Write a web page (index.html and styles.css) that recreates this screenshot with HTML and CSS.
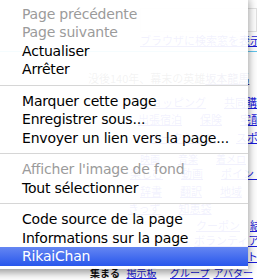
FILE: index.html
```html
<!DOCTYPE html>
<html lang="fr">
<head>
  <meta charset="UTF-8" />
  <title>Menu contextuel</title>
  <link rel="stylesheet" href="styles.css">
</head>
<body>
  <!-- Page web en arriere-plan -->
  <div class="page">
    <div class="row row-search"><div class="search-box"></div></div>
    <div class="row row-hint"><a class="link">ブラウザに検索窓を表示</a></div>
    <div class="rule"></div>
    <div class="row row-news">没後140年、幕末の英雄 <a class="link dark">坂本龍馬</a></div>
    <div class="row row-a"><a class="link">ショッピング</a><a class="link">共同購入</a></div>
    <div class="row row-b"><a class="link">出張宿泊</a><a class="link">保険</a><a class="link">宅配</a></div>
    <div class="row row-c"><a class="link">オークション</a><a class="link">スポーツ</a></div>
    <div class="row row-d"><a class="link">映画</a><a class="link">音楽</a><a class="link">着メロ</a></div>
    <div class="row row-e"><a class="link">楽しむ</a><a class="link">動画</a><a class="link">ポイント</a></div>
    <div class="row row-f"><a class="link">辞書</a><a class="link">翻訳</a><a class="link">地域</a></div>
    <div class="row row-g"><a class="link">きっず</a><a class="link">知恵袋</a></div>
    <div class="row row-h"><a class="link">クーポン</a><a class="link">結婚</a></div>
    <div class="row row-i"><a class="link">ボランティア</a></div>
    <div class="row row-j"><a class="link">求人・転職</a><a class="link">アルバイト</a></div>
    <div class="row row-k"><b class="label">集まる</b><a class="link">掲示板</a><a class="link">グループ</a><a class="link">アバター</a></div>
  </div>

  <!-- Menu contextuel -->
  <div class="menu">
    <div class="item disabled">Page précédente</div>
    <div class="item disabled">Page suivante</div>
    <div class="item">Actualiser</div>
    <div class="item">Arrêter</div>
    <div class="sep"></div>
    <div class="item">Marquer cette page</div>
    <div class="item">Enregistrer sous...</div>
    <div class="item">Envoyer un lien vers la page...</div>
    <div class="sep"></div>
    <div class="item disabled">Afficher l'image de fond</div>
    <div class="item">Tout sélectionner</div>
    <div class="sep"></div>
    <div class="item">Code source de la page</div>
    <div class="item">Informations sur la page</div>
    <div class="item selected">RikaiChan</div>
  </div>
</body>
</html>
```

FILE: styles.css
```css
body {
  margin: 0;
  width: 257px;
  height: 280px;
  overflow: hidden;
  position: relative;
  background: #ffffff;
}

/* Page en arriere-plan */
.page {
  display: flex;
  flex-direction: column;
  height: 280px;
  overflow: hidden;
  font-family: "Noto Sans CJK JP", sans-serif;
  font-size: 11px;
  line-height: 14px;
  color: #333;
}

.row {
  display: flex;
  white-space: nowrap;
  gap: 18px;
  flex-shrink: 0;
}

.link {
  color: #1a1adb;
  text-decoration: underline;
}

.link.dark {
  color: #1a1a8a;
}

.row-search {
  height: 33px;
  padding-top: 8px;
  box-sizing: border-box;
}

.search-box {
  margin-left: 140px;
  width: 160px;
  height: 22px;
  border: 1px solid #e2e2e2;
}

.row-hint { height: 18px; padding-left: 140px; }

.rule {
  height: 1px;
  flex-shrink: 0;
  background: #5fc6ee;
  margin-bottom: 19px;
}

.row-news { height: 24px; padding-left: 88px; gap: 0; }
.row-a { height: 17px; padding-left: 140px; }
.row-b { height: 18px; padding-left: 138px; }
.row-c { height: 23px; padding-left: 150px; gap: 20px; }
.row-d { height: 13px; line-height: 12px; font-size: 10px; padding-left: 140px; }
.row-e { height: 18px; padding-left: 130px; }
.row-f { height: 17px; padding-left: 140px; }
.row-g { height: 17px; padding-left: 128px; }
.row-h { height: 15px; padding-left: 196px; gap: 10px; }
.row-i { height: 16px; padding-left: 194px; }
.row-j { height: 18px; padding-left: 130px; }

.row-k {
  height: 12px;
  padding-left: 90px;
  font-size: 10px;
  line-height: 12px;
  gap: 0;
}

.row-k .label { width: 42px; color: #111; }
.row-k .link { width: 50px; }

/* Menu contextuel */
.menu {
  position: absolute;
  left: -10px;
  top: -4px;
  width: 258px;
  padding: 8.5px 0 3px;
  background: rgba(255, 255, 255, 0.94);
  box-shadow: 0 3px 9px rgba(0, 0, 0, 0.45);
  font-family: "DejaVu Sans", sans-serif;
  font-size: 14px;
  letter-spacing: -0.2px;
  color: #000;
}

.item {
  height: 18.5px;
  line-height: 18.5px;
  padding-left: 32px;
  white-space: nowrap;
}

.item.disabled {
  color: #9b9b9b;
}

.item.selected {
  color: #fff;
  background: linear-gradient(#6586f2, #2857ec);
}

.sep {
  height: 13px;
  display: flex;
  align-items: center;
}

.sep::before {
  content: "";
  flex: 1;
  height: 1px;
  background: #d6d6d6;
}
```
